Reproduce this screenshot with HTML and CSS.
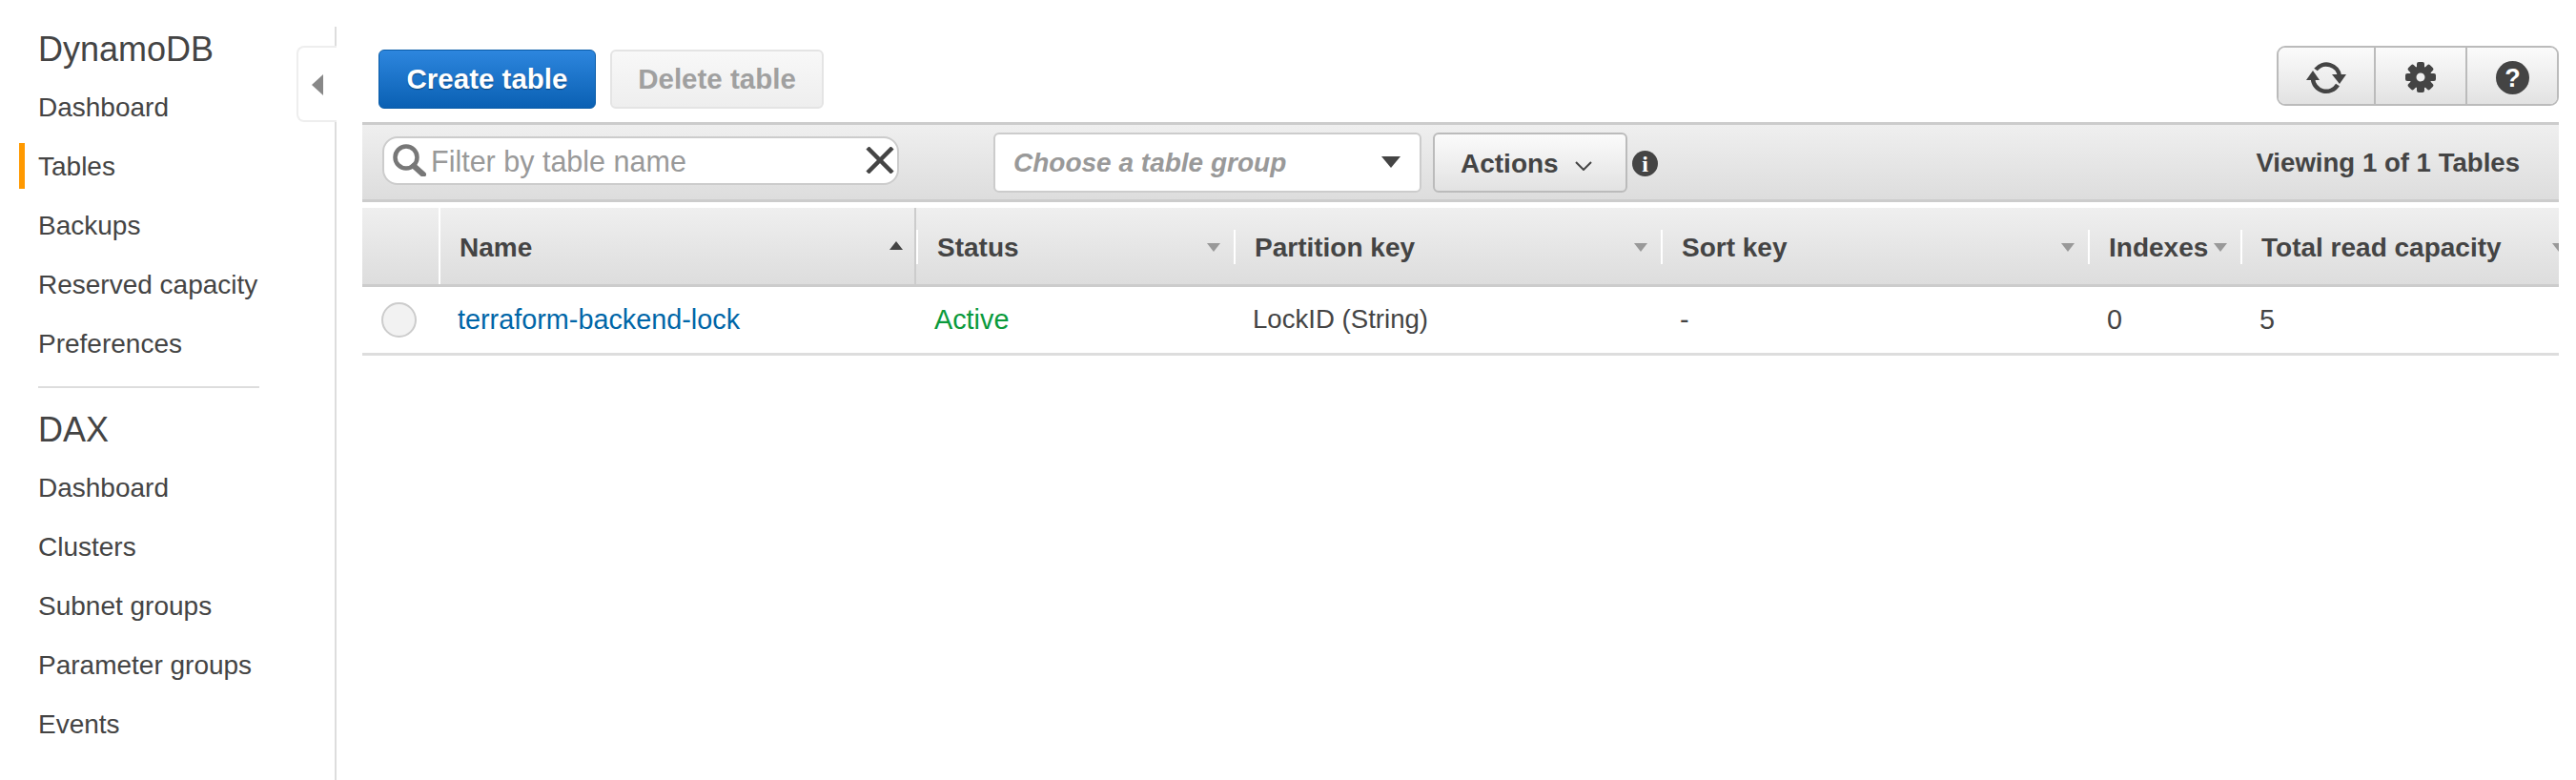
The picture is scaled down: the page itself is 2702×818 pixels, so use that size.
FILE: index.html
```html
<!DOCTYPE html>
<html>
<head>
	<title>DynamoDB</title>
	<link rel="stylesheet" href="styles.css">
</head>
<body>
	<!-- left nav -->
	<nav class="sidebar">
		<h2 class="nav-title">DynamoDB</h2>
		<a class="nav-item">Dashboard</a>
		<a class="nav-item nav-active">Tables</a>
		<a class="nav-item">Backups</a>
		<a class="nav-item">Reserved capacity</a>
		<a class="nav-item">Preferences</a>
		<hr class="nav-divider">
		<h2 class="nav-title">DAX</h2>
		<a class="nav-item">Dashboard</a>
		<a class="nav-item">Clusters</a>
		<a class="nav-item">Subnet groups</a>
		<a class="nav-item">Parameter groups</a>
		<a class="nav-item">Events</a>
		<div class="collapse-tab"><span class="collapse-arrow"></span></div>
	</nav>

	<main class="content">
		<div class="top-bar">
			<button class="btn btn-primary">Create table</button>
			<button class="btn btn-disabled">Delete table</button>
			<div class="icon-group">
				<button class="icon-btn icon-refresh">
					<svg width="42" height="36" viewBox="0 0 42 36">
						<path d="M10 10A14 14 0 0 1 35 17" fill="none" stroke="#444" stroke-width="4.5"/>
						<path d="M33 26A14 14 0 0 1 7 19" fill="none" stroke="#444" stroke-width="4.5"/>
						<path d="M27 15H42L35 25Z" fill="#444"/>
						<path d="M0 21H14L7 11Z" fill="#444"/>
					</svg>
				</button>
				<button class="icon-btn icon-gear">
					<svg width="32" height="32" viewBox="0 0 32 32">
						<g fill="#444">
							<rect x="12" y="0" width="8" height="32" rx="2"/>
							<rect x="12" y="0" width="8" height="32" rx="2" transform="rotate(45 16 16)"/>
							<rect x="12" y="0" width="8" height="32" rx="2" transform="rotate(90 16 16)"/>
							<rect x="12" y="0" width="8" height="32" rx="2" transform="rotate(135 16 16)"/>
							<circle cx="16" cy="16" r="11.5"/>
						</g>
						<circle cx="16" cy="16" r="4.5" fill="#eee"/>
					</svg>
				</button>
				<button class="icon-btn icon-help">
					<svg width="35" height="35" viewBox="0 0 35 35">
						<circle cx="17.5" cy="17.5" r="17.5" fill="#444"/>
						<text x="17.5" y="27" text-anchor="middle" class="help-mark">?</text>
					</svg>
				</button>
			</div>
		</div>

		<div class="toolbar">
			<label class="search-box">
				<svg class="search-icon" width="35" height="34" viewBox="0 0 35 34">
					<circle cx="14" cy="14" r="11.5" fill="none" stroke="#777" stroke-width="4.5"/>
					<path d="M22 23L32 32" stroke="#777" stroke-width="6" stroke-linecap="round"/>
				</svg>
				<input class="search-input" type="text" placeholder="Filter by table name">
				<svg class="clear-icon" width="30" height="28" viewBox="0 0 30 28">
					<path d="M2 1L28 27M28 1L2 27" stroke="#444" stroke-width="4.5"/>
				</svg>
			</label>
			<div class="group-select">
				<span>Choose a table group</span>
				<span class="select-arrow"></span>
			</div>
			<button class="btn-actions">Actions
				<svg width="18" height="10" viewBox="0 0 18 10"><path d="M1 1L9 9L17 1" fill="none" stroke="#444" stroke-width="2"/></svg>
			</button>
			<svg class="info-icon" width="27" height="27" viewBox="0 0 27 27">
				<circle cx="13.5" cy="13.5" r="13.5" fill="#444"/>
				<text x="13.5" y="22" text-anchor="middle" class="info-mark">i</text>
			</svg>
			<div class="viewing">Viewing 1 of 1 Tables</div>
		</div>

		<div class="table-wrap">
			<table class="tables">
				<colgroup>
					<col class="col-check"><col class="col-name"><col class="col-status"><col class="col-key"><col class="col-key"><col class="col-index"><col class="col-read">
				</colgroup>
				<thead>
					<tr>
						<th></th>
						<th class="th-sorted"><div class="th-inner"><span>Name</span><span class="sort sort-up"></span></div></th>
						<th><div class="th-inner"><span>Status</span><span class="sort"></span></div></th>
						<th><div class="th-inner"><span>Partition key</span><span class="sort"></span></div></th>
						<th><div class="th-inner"><span>Sort key</span><span class="sort"></span></div></th>
						<th><div class="th-inner"><span>Indexes</span><span class="sort"></span></div></th>
						<th><div class="th-inner"><span>Total read capacity</span><span class="sort"></span></div></th>
					</tr>
				</thead>
				<tbody>
					<tr>
						<td><span class="radio"></span></td>
						<td><a class="table-link">terraform-backend-lock</a></td>
						<td class="status-active">Active</td>
						<td class="key-cell">LockID (String)</td>
						<td>-</td>
						<td>0</td>
						<td>5</td>
					</tr>
				</tbody>
			</table>
		</div>
	</main>
</body>
</html>
```
FILE: styles.css
```css
* {
	box-sizing: border-box;
}
body {
	margin: 0;
	height: 818px;
	overflow: hidden;
	display: flex;
	background-color: #fff;
	color: #444;
	font-family: "Liberation Sans", Arial, sans-serif;
	font-size: 28px;
}

/* Sidebar */
.sidebar {
	position: relative;
	width: 353px;
	height: 790px;
	margin-top: 28px;
	border-right: 2px solid #ddd;
	flex: none;
}
.nav-title {
	margin: 0 0 12px 40px;
	font-size: 36px;
	font-weight: normal;
	line-height: 48px;
}
.nav-item {
	display: block;
	height: 48px;
	margin-bottom: 14px;
	padding-left: 40px;
	line-height: 50px;
}
.nav-active {
	margin-left: 20px;
	padding-left: 14px;
	border-left: 6px solid #f90;
}
.nav-divider {
	width: 232px;
	height: 2px;
	margin: 21px 0 20px 40px;
	border: none;
	background-color: #ddd;
}
.collapse-tab {
	position: absolute;
	top: 20px;
	right: -2px;
	width: 42px;
	height: 80px;
	display: flex;
	align-items: center;
	padding: 2px 0 0 14px;
	background-color: #fff;
	border: 2px solid #eee;
	border-right: none;
	border-radius: 8px 0 0 8px;
}
.collapse-arrow {
	border-top: 11px solid transparent;
	border-bottom: 11px solid transparent;
	border-right: 12px solid #888;
}

/* Main area */
.content {
	flex: 1;
	min-width: 0;
	padding: 48px 18px 0 27px;
}
.top-bar {
	display: flex;
	height: 80px;
	padding-left: 17px;
}
.btn {
	width: 228px;
	height: 62px;
	margin-top: 4px;
	border-radius: 6px;
	font-family: inherit;
	font-size: 29.5px;
	font-weight: bold;
}
.btn-primary {
	background: linear-gradient(#2d86de, #0a60b3);
	border: 1px solid #0a5ca8;
	color: #fff;
	text-shadow: 0 1px 1px rgba(0, 0, 0, 0.4);
}
.btn-disabled {
	width: 224px;
	margin-left: 15px;
	background: linear-gradient(#f8f8f8, #eee);
	border: 2px solid #e4e4e4;
	color: #a0a0a0;
}
.icon-group {
	display: flex;
	height: 63px;
	margin-left: auto;
	border: 2px solid #bbb;
	border-radius: 9px;
	overflow: hidden;
}
.icon-btn {
	display: flex;
	align-items: center;
	justify-content: center;
	padding: 3px 0 0;
	border: none;
	border-right: 2px solid #bbb;
	background: linear-gradient(#fbfbfb, #e2e2e2);
}
.icon-refresh {
	width: 102px;
}
.icon-gear {
	width: 96px;
}
.icon-help {
	width: 94px;
	border-right: none;
}
.help-mark {
	fill: #fff;
	font-size: 27px;
	font-weight: bold;
}

/* Filter toolbar */
.toolbar {
	display: flex;
	align-items: center;
	height: 84px;
	padding-left: 21px;
	background: linear-gradient(#efefef, #ddd);
	border-top: 3px solid #ccc;
	border-bottom: 3px solid #ccc;
}
.search-box {
	display: flex;
	align-items: center;
	width: 542px;
	height: 51px;
	margin-bottom: 4px;
	padding: 0 3px 0 9px;
	background-color: #fff;
	border: 2px solid #ccc;
	border-radius: 16px;
}
.search-icon {
	flex: none;
}
.search-input {
	flex: 1;
	min-width: 0;
	margin-left: 5px;
	padding: 3px 0 0;
	border: none;
	outline: none;
	font-family: inherit;
	font-size: 30.5px;
}
.search-input::placeholder {
	color: #999;
}
.clear-icon {
	flex: none;
}
.group-select {
	display: flex;
	align-items: center;
	justify-content: space-between;
	width: 449px;
	height: 63px;
	margin-left: 99px;
	padding: 2px 20px 0 19px;
	background-color: #fff;
	border: 2px solid #ccc;
	border-radius: 6px;
	color: #999;
	font-style: italic;
	font-weight: bold;
}
.select-arrow {
	margin-top: -3px;
	border-left: 10px solid transparent;
	border-right: 10px solid transparent;
	border-top: 12px solid #444;
}
.btn-actions {
	display: flex;
	align-items: center;
	gap: 17px;
	width: 204px;
	height: 63px;
	margin-left: 12px;
	padding: 3px 0 0 27px;
	background: linear-gradient(#fbfbfb, #e2e2e2);
	border: 2px solid #bbb;
	border-radius: 6px;
	color: #444;
	font-family: inherit;
	font-size: 28px;
	font-weight: bold;
}
.btn-actions svg {
	margin-top: 5px;
}
.info-icon {
	margin: 2px 0 0 5px;
	flex: none;
}
.info-mark {
	fill: #fff;
	font-family: "Liberation Serif", serif;
	font-size: 24px;
	font-weight: bold;
}
.viewing {
	margin-left: auto;
	padding: 2px 41px 0 0;
	font-size: 27.6px;
	font-weight: bold;
}

/* Table */
.table-wrap {
	margin-top: 6px;
	overflow: hidden;
}
.tables {
	width: 2325px;
	table-layout: fixed;
	border-collapse: collapse;
}
.col-check {
	width: 81px;
}
.col-name {
	width: 499px;
}
.col-status {
	width: 334px;
}
.col-key {
	width: 448px;
}
.col-index {
	width: 160px;
}
.col-read {
	width: 355px;
}
.tables th {
	height: 81px;
	padding: 2px 0 0;
	background: linear-gradient(#efefef, #ddd);
	border-bottom: 3px solid #ccc;
	font-size: 28px;
	text-align: left;
}
.th-inner {
	display: flex;
	align-items: center;
	justify-content: space-between;
	height: 36px;
	padding: 2px 14px 0 20px;
	border-left: 2px solid #fff;
}
.tables .th-sorted {
	border-left: 2px solid #fff;
	border-right: 2px solid #ccc;
}
.th-sorted .th-inner {
	border-left: none;
	padding-right: 12px;
}
.sort {
	border-left: 7px solid transparent;
	border-right: 7px solid transparent;
	border-top: 9px solid #999;
}
.sort-up {
	margin-top: -5px;
	border-top: none;
	border-bottom: 9px solid #444;
}
.tables td {
	height: 72px;
	padding: 0 0 0 20px;
	border-bottom: 3px solid #ddd;
	font-size: 28.8px;
}
.tables .key-cell {
	font-size: 27.6px;
}
.radio {
	display: block;
	width: 37px;
	height: 37px;
	background-color: #f2f2f2;
	border: 2px solid #ccc;
	border-radius: 50%;
}
.table-link {
	margin-left: -1px;
	color: #0066a8;
}
.status-active {
	color: #0a9a3c;
}
```
